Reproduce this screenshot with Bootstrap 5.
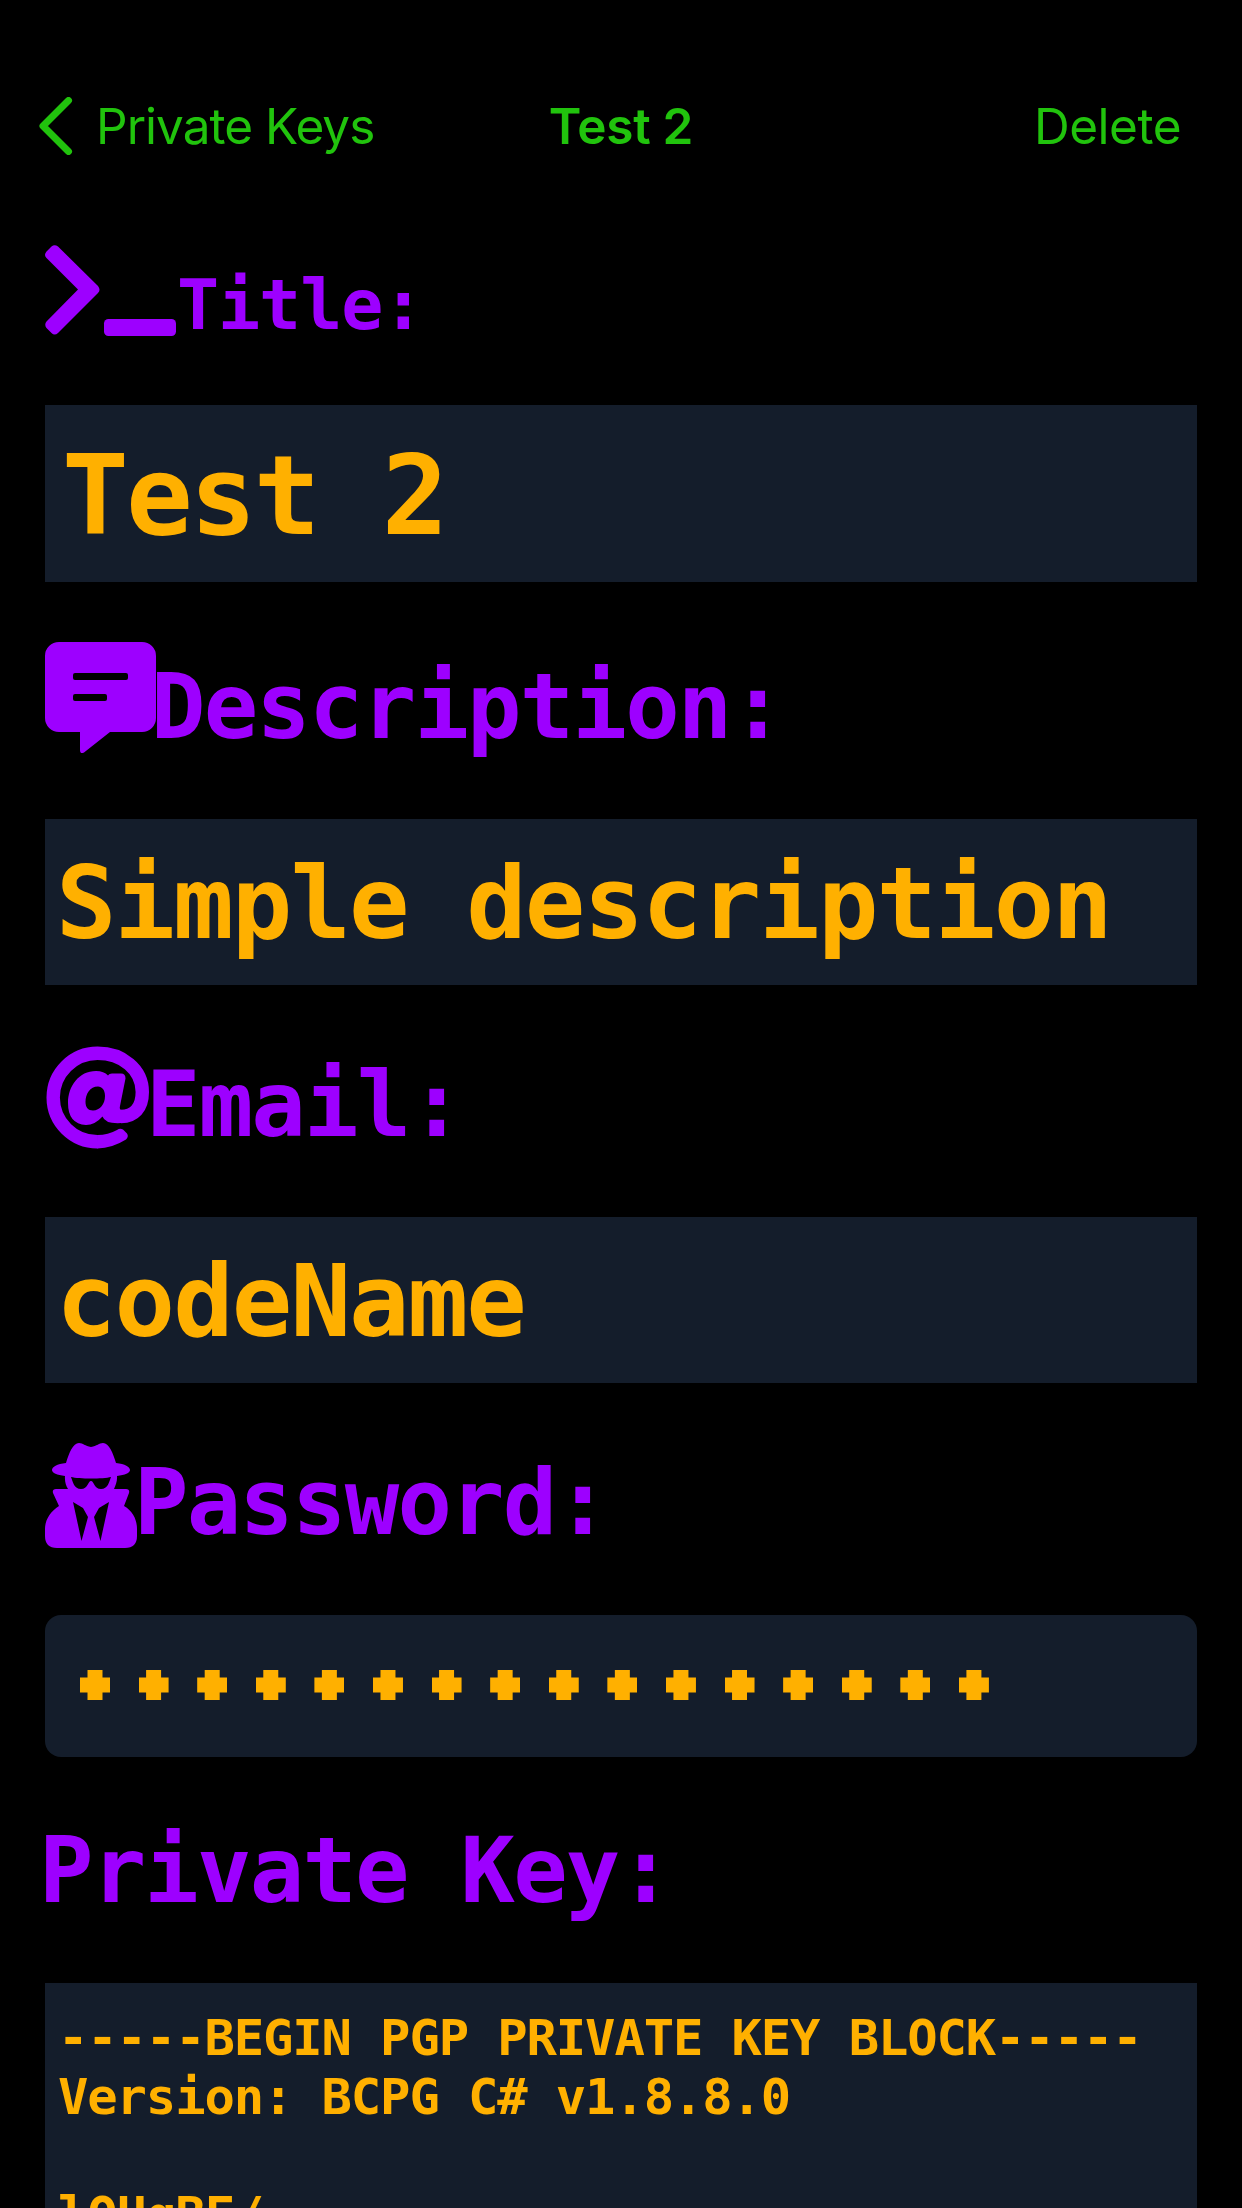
<!DOCTYPE html>
<html lang="en">
<head>
<meta charset="utf-8">
<meta name="viewport" content="width=device-width, initial-scale=1">
<title>Test 2</title>
<link href="https://cdn.jsdelivr.net/npm/bootstrap@5.3.0/dist/css/bootstrap.min.css" rel="stylesheet">
<style>
  body { background: #000; height: 2208px; font-family: "DejaVu Sans Mono", monospace; }
  .topbar { height: 210px; padding: 78px 39px 0 39px; font-family: Inter, sans-serif; font-size: 49.5px; line-height: 96px; color: #21c30d; }
  .topbar a, .topbar button { color: inherit; text-decoration: none; font: inherit; line-height: 96px; }
  .topbar > * { flex: 1 1 0; }
  .back-link { letter-spacing: -.97px; }
  .back-link svg { margin-right: 23px; }
  .screen-name { font-size: 49.5px; line-height: 96px; font-weight: 600; letter-spacing: -.3px; }
  .del-btn { letter-spacing: -.5px; margin-right: 22px; }
  .field-head { flex: none; color: #9d00ff; font-weight: 700; font-size: 90.5px; line-height: 1; letter-spacing: -1.8px; white-space: pre; }
  .field-head svg { flex: none; display: block; overflow: visible; }
  .head-title { height: 195px; padding-top: 35px; font-size: 70px; letter-spacing: -1.1px; }
  .head-title span { margin: 25px 0 0 -2px; }
  .head-desc { height: 237px; padding-top: 60px; }
  .head-desc span { margin: 20px 0 0 -5px; }
  .head-mail { height: 232px; padding-top: 61px; }
  .head-mail span { margin: 14px 0 0 -4px; }
  .head-pass { height: 232px; padding-top: 60px; }
  .head-pass span { margin: 15px 0 0 -3px; }
  .head-key { height: 226px; padding-top: 69px; }
  .head-key span { margin-left: -6px; }
  .field-box { flex: none; background: #141d2b; color: #ffb000; font-weight: 700; white-space: pre; overflow: hidden; }
  .box-lg { height: 177px; padding: 35px 0 0 17px; font-size: 111px; line-height: 1; letter-spacing: -2.9px; }
  .box-md { height: 166px; padding: 35px 0 0 11px; font-size: 100.5px; line-height: 1; letter-spacing: -1.9px; }
  .box-dots { height: 142px; border-radius: 16px; padding: 0 0 2px 35px; gap: 28.6px; }
  .dot { width: 30px; height: 30px; background: #ffb000; clip-path: polygon(25% 0, 75% 0, 75% 25%, 100% 25%, 100% 75%, 75% 75%, 75% 100%, 25% 100%, 25% 75%, 0 75%, 0 25%, 25% 25%); }
  .box-key { height: 225px; padding: 25px 0 0 13px; font-size: 50.5px; line-height: 59px; letter-spacing: -1.12px; }
  main { padding: 0 45px; }
</style>
</head>
<body class="d-flex flex-column overflow-hidden">
<header class="topbar d-flex align-items-start">
  <a href="#" class="back-link d-flex align-items-center">
    <svg width="34" height="58" viewBox="0 0 34 58" fill="none" stroke="currentColor" stroke-width="7" stroke-linecap="round" stroke-linejoin="round"><path d="M29.500 3.500L4 29L29.500 54.500"/></svg>
    <span>Private Keys</span>
  </a>
  <h1 class="screen-name text-center m-0">Test 2</h1>
  <div class="d-flex justify-content-end"><button type="button" class="del-btn btn p-0 border-0">Delete</button></div>
</header>
<main class="d-flex flex-column">
  <div class="field-head head-title d-flex align-items-start">
    <svg width="134" height="92" viewBox="0 0 134 92" fill="currentColor"><path d="M0 10Q0 8 1.500 6.500L6.500 1.500Q9.500-1 13 1.500L53 41Q56 45 53 48L13 88Q9.500 91 6.500 88L1.500 83Q-1 79.500 1.500 76.500L33 44.500L1.500 13Q0 11.500 0 10Z"/><rect x="59" y="74" width="72" height="17" rx="4.500"/></svg><span>Title:</span>
  </div>
  <div class="field-box box-lg">Test 2</div>

  <div class="field-head head-desc d-flex align-items-start">
    <svg width="111" height="112" viewBox="0 0 111 112" fill="currentColor"><path fill-rule="evenodd" d="M14 0H97A14 14 0 0 1 111 14V76A14 14 0 0 1 97 90H65L39 110.500Q35 112.500 35 108V90H14A14 14 0 0 1 0 76V14A14 14 0 0 1 14 0ZM30 31Q28 31 28 33V36Q28 38 30 38H81Q83 38 83 36V33Q83 31 81 31ZM30 52Q28 52 28 54V57Q28 59 30 59H60Q62 59 62 57V54Q62 52 60 52Z"/></svg><span>Description:</span>
  </div>
  <div class="field-box box-md">Simple description</div>

  <div class="field-head head-mail d-flex align-items-start">
    <svg width="105" height="104" viewBox="0 0 105 104" fill="none" stroke="currentColor"><path d="M53 95.700A44.300 44.300 0 0 1 8.200 51.500A44.300 44.300 0 0 1 52.500 7.300C77 7.300 97.300 23 97.300 46C97.300 62 89 70.500 76 70.500" stroke-width="13.400"/><path d="M52.500 102.400Q67 102.300 81 93.500Q84 90.500 82 87.500L78 83.500Q75 82 72 84Q63 89 52.500 89Z" fill="currentColor" stroke="none"/><path fill-rule="evenodd" d="M51 25Q59 25 63 29.500Q64 27.500 67 27.500H76Q80.500 27.500 80.500 32.500L75 60Q74 64 77 64L76 77.100Q60 78 57.500 70.500Q50 79 41 79Q23 78 23 57C23 40 34 25 51 25ZM53 40.500C45 40.500 40.500 48 40.500 56C40.500 61 43 64.500 48 64.500C55 64.500 60 58 60 50C60 44 57 40.500 53 40.500Z" fill="currentColor" stroke="none"/></svg><span>Email:</span>
  </div>
  <div class="field-box box-md">codeName</div>

  <div class="field-head head-pass d-flex align-items-start">
    <svg width="92" height="105" viewBox="0 0 92 105" fill="currentColor"><path fill-rule="evenodd" d="M46 4C52 3 54 0 58 0C64 0 68 10 71 20C80 21 85 24 85 27C85 30 80 32 72 33C72.500 38 70.500 43 69 46H81Q85 46 84 50L79 63C88 68 92 77 92 86V93Q92 105 80 105H12Q0 105 0 93V86C0 77 5 69 14 63L8 50Q7 46 11 46H23C21 43 19.500 38 20 33C12 32 7 30 7 27C7 24 12 21 21 20C24 10 28 0 34 0C38 0 40 3 46 4ZM26 34C28 39 29 46 36 46C43 46 43 38 46 38C49 38 49 46 56 46C63 46 64 39 66 34C58 36 34 36 26 34ZM28 59L36.500 98L43 74L38 65ZM64 59L54 65L49 74L55.500 98Z"/></svg><span>Password:</span>
  </div>
  <div class="field-box box-dots d-flex align-items-center" role="textbox" aria-label="Password">
    <i class="dot"></i><i class="dot"></i><i class="dot"></i><i class="dot"></i><i class="dot"></i><i class="dot"></i><i class="dot"></i><i class="dot"></i><i class="dot"></i><i class="dot"></i><i class="dot"></i><i class="dot"></i><i class="dot"></i><i class="dot"></i><i class="dot"></i><i class="dot"></i>
  </div>

  <div class="field-head head-key d-flex align-items-start"><span>Private Key:</span></div>
  <div class="field-box box-key">-----BEGIN PGP PRIVATE KEY BLOCK-----
Version: BCPG C# v1.8.8.0

lQHgBF/</div>
</main>
<script src="https://cdn.jsdelivr.net/npm/bootstrap@5.3.0/dist/js/bootstrap.bundle.min.js"></script>
</body>
</html>
